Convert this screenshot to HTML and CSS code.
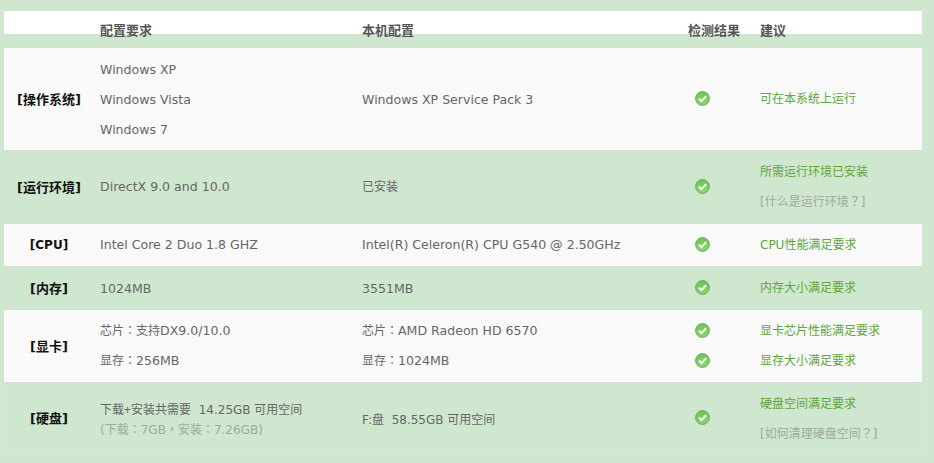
FILE: index.html
```html
<!DOCTYPE html>
<html lang="zh-CN">
<head>
<meta charset="utf-8">
<title>配置检测</title>
<link rel="stylesheet" href="styles.css">
</head>
<body>
<svg class="sprite" width="0" height="0" aria-hidden="true">
  <defs>
    <linearGradient id="ok" x1="0" y1="0" x2="0" y2="1">
      <stop offset="0" stop-color="#6cc451"/>
      <stop offset="1" stop-color="#8ad870"/>
    </linearGradient>
    <symbol id="check" viewBox="0 0 15 15">
      <circle cx="7.5" cy="7.5" r="6.9" fill="url(#ok)" stroke="#68ab58" stroke-width="1"/>
      <path d="M3.9 7.6 6.4 10.1 11.1 5.2" fill="none" stroke="#fff" stroke-width="2"/>
    </symbol>
  </defs>
</svg>
<main class="sheet">
  <div class="head">
    <div class="row-grid head-grid">
      <span></span><b>配置要求</b><b>本机配置</b><b>检测结果</b><b>建议</b>
    </div>
  </div>
  <section class="row-grid row light r-os">
    <h3>[操作系统]</h3>
    <div class="stack s30 down"><p>Windows XP</p><p>Windows Vista</p><p>Windows 7</p></div>
    <div class="stack down"><p>Windows XP Service Pack 3</p></div>
    <div class="stack icons"><svg class="ic"><use href="#check"/></svg></div>
    <div class="stack"><p class="ok">可在本系统上运行</p></div>
  </section>
  <section class="row-grid row green r-env">
    <h3>[运行环境]</h3>
    <div class="stack"><p>DirectX 9.0 and 10.0</p></div>
    <div class="stack"><p><span class="zh">已安装</span></p></div>
    <div class="stack icons"><svg class="ic"><use href="#check"/></svg></div>
    <div class="stack s30"><p class="ok">所需运行环境已安装</p><p class="hint">[什么是运行环境<span class="cp">？</span>]</p></div>
  </section>
  <section class="row-grid row light r-cpu">
    <h3>[CPU]</h3>
    <div class="stack"><p>Intel Core 2 Duo 1.8 GHZ</p></div>
    <div class="stack"><p>Intel(R) Celeron(R) CPU G540 @ 2.50GHz</p></div>
    <div class="stack icons"><svg class="ic"><use href="#check"/></svg></div>
    <div class="stack"><p class="ok">CPU性能满足要求</p></div>
  </section>
  <section class="row-grid row green r-mem">
    <h3>[内存]</h3>
    <div class="stack down"><p>1024MB</p></div>
    <div class="stack down"><p>3551MB</p></div>
    <div class="stack icons"><svg class="ic"><use href="#check"/></svg></div>
    <div class="stack"><p class="ok">内存大小满足要求</p></div>
  </section>
  <section class="row-grid row light r-gpu">
    <h3>[显卡]</h3>
    <div class="stack s30"><p><span class="zh">芯片<span class="cp">：</span>支持</span>DX9.0/10.0</p><p><span class="zh">显存<span class="cp">：</span></span>256MB</p></div>
    <div class="stack s30"><p><span class="zh">芯片<span class="cp">：</span></span>AMD Radeon HD 6570</p><p><span class="zh">显存<span class="cp">：</span></span>1024MB</p></div>
    <div class="stack s30 icons"><svg class="ic"><use href="#check"/></svg><svg class="ic"><use href="#check"/></svg></div>
    <div class="stack s30"><p class="ok">显卡芯片性能满足要求</p><p class="ok">显存大小满足要求</p></div>
  </section>
  <section class="row-grid row green last r-hdd">
    <h3>[硬盘]</h3>
    <div class="stack down"><p class="fit">下载<span class="plus">+</span>安装共需要&nbsp; 14.25GB 可用空间</p><p class="hint">(下载<span class="cp">：</span>7GB<span class="cp">，</span>安装<span class="cp">：</span>7.26GB)</p></div>
    <div class="stack down"><p class="fit">F:盘&nbsp; 58.55GB 可用空间</p></div>
    <div class="stack icons"><svg class="ic"><use href="#check"/></svg></div>
    <div class="stack s30"><p class="ok">硬盘空间满足要求</p><p class="hint">[如何清理硬盘空间<span class="cp">？</span>]</p></div>
  </section>
</main>
</body>
</html>
```
FILE: styles.css
```css
* { box-sizing: border-box; }
html, body { margin: 0; padding: 0; }
body {
  width: 934px;
  height: 463px;
  overflow: hidden;
  background: #cfe7cf;
  font-family: "DejaVu Sans", "Noto Sans CJK SC", sans-serif;
  font-size: 12.55px;
  color: #666;
}
.sprite { display: block; height: 0; }
.sheet { width: 918px; margin: 11px 0 0 4px; }
p, h3 { margin: 0; }
.zh { font-size: 12px; line-height: 1; }
.cp { font-family: "Noto Sans CJK TC", sans-serif; font-feature-settings: "locl" 0; line-height: 1; }
.plus { font-family: "Liberation Sans", sans-serif; line-height: 1; }
.row-grid {
  display: grid;
  grid-template-columns: 96px 262px 316px 82px 1fr;
  align-items: center;
}
.head {
  height: 37px;
  background: linear-gradient(#fff, #fff) no-repeat top / 100% 23px;
}
.head-grid { height: 37px; align-items: start; padding-top: 11px; }
.head b { font-size: 13px; line-height: 17px; color: #555; font-weight: 700; }
.head b:nth-child(4) { padding-left: 10px; white-space: nowrap; }
.row h3 { font-size: 13px; font-weight: 700; color: #111; text-align: center; padding: 0 6px 2px 0; }
.row.r-cpu h3 { font-size: 12px; padding-bottom: 0; }
.light { background: #f9f9f9; }
.green { background: #cfe7cf; }
.r-os { height: 102px; }
.r-env { height: 74px; }
.r-cpu { height: 42px; }
.r-mem { height: 44px; }
.r-gpu { height: 72px; }
.r-hdd { height: 73px; }
.last { box-shadow: inset 1px 0 0 #d6e6d6, inset -1px 0 0 #d6e6d6, inset 0 -1px 0 #d6e6d6; }
.stack { display: flex; flex-direction: column; }
.stack p { line-height: 20px; white-space: nowrap; }
.stack .fit { font-size: 12px; }
.s30 { gap: 10px; }
.down { padding-top: 2px; }
.icons { padding-left: 17px; padding-bottom: 2px; align-items: flex-start; }
.ic { display: block; width: 15px; height: 15px; margin: 2.5px 0; }
.ok { color: #5ea63c; font-size: 12px; }
.hint { color: #a0a8a0; font-size: 12px; }
```
